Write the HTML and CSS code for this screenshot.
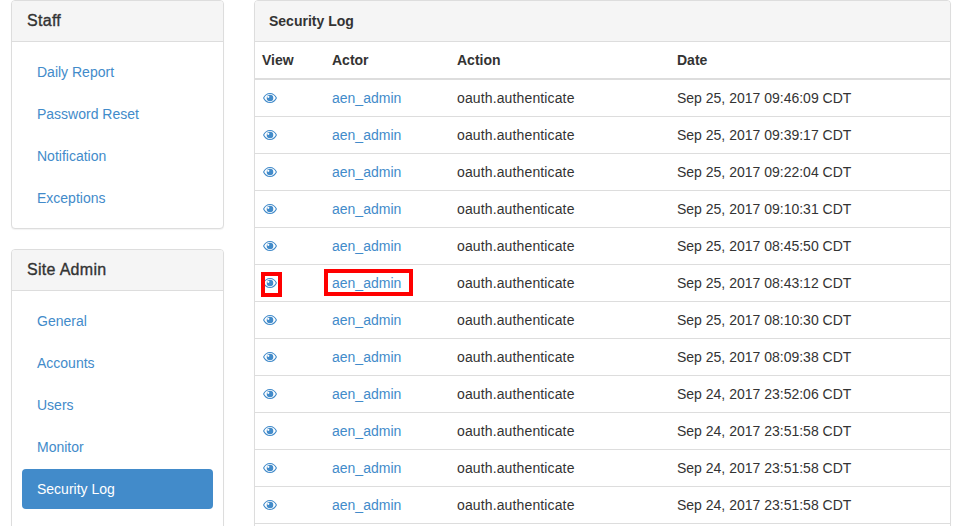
FILE: index.html
```html
<!DOCTYPE html>
<html lang="en">
<head>
<meta charset="utf-8">
<title>Security Log</title>
<link rel="stylesheet" href="styles.css">
</head>
<body>
<svg class="defs" width="0" height="0" aria-hidden="true">
  <symbol id="eye" viewBox="0 0 14 10">
    <path fill-rule="evenodd" d="M7 0C3.8 0 1.300 2 0 5c1.300 3 3.800 5 7 5s5.700-2 7-5C12.700 2 10.200 0 7 0zM7 1.100c2.500 0 4.700 1.500 5.800 3.900C11.700 7.400 9.500 8.900 7 8.900S2.300 7.400 1.200 5C2.300 2.600 4.500 1.100 7 1.100z"/>
    <path fill-rule="evenodd" d="M7 1.700A3.300 3.300 0 1 0 7 8.300 3.300 3.300 0 0 0 7 1.700zM5.300 2.700a1.100 1.100 0 1 1 0 2.200 1.100 1.100 0 0 1 0-2.200z"/>
  </symbol>
</svg>
<div class="layout">
  <aside class="sidebar">
    <section class="panel">
      <h3 class="panel-heading">Staff</h3>
      <ul class="nav">
        <li><a href="#">Daily Report</a></li>
        <li><a href="#">Password Reset</a></li>
        <li><a href="#">Notification</a></li>
        <li><a href="#">Exceptions</a></li>
      </ul>
    </section>
    <section class="panel">
      <h3 class="panel-heading">Site Admin</h3>
      <ul class="nav">
        <li><a href="#">General</a></li>
        <li><a href="#">Accounts</a></li>
        <li><a href="#">Users</a></li>
        <li><a href="#">Monitor</a></li>
        <li class="active"><a href="#">Security Log</a></li>
        <li><a href="#">Repo Groups</a></li>
      </ul>
    </section>
  </aside>
  <main class="content">
    <section class="panel">
      <h3 class="panel-heading log-heading">Security Log</h3>
      <table class="log">
        <thead>
          <tr><th class="c-view">View</th><th class="c-actor">Actor</th><th class="c-action">Action</th><th>Date</th></tr>
        </thead>
        <tbody>
          <tr><td><a class="eye" href="#"><svg><use href="#eye"/></svg></a></td><td><a href="#">aen_admin</a></td><td>oauth.authenticate</td><td>Sep 25, 2017 09:46:09 CDT</td></tr>
          <tr><td><a class="eye" href="#"><svg><use href="#eye"/></svg></a></td><td><a href="#">aen_admin</a></td><td>oauth.authenticate</td><td>Sep 25, 2017 09:39:17 CDT</td></tr>
          <tr><td><a class="eye" href="#"><svg><use href="#eye"/></svg></a></td><td><a href="#">aen_admin</a></td><td>oauth.authenticate</td><td>Sep 25, 2017 09:22:04 CDT</td></tr>
          <tr><td><a class="eye" href="#"><svg><use href="#eye"/></svg></a></td><td><a href="#">aen_admin</a></td><td>oauth.authenticate</td><td>Sep 25, 2017 09:10:31 CDT</td></tr>
          <tr><td><a class="eye" href="#"><svg><use href="#eye"/></svg></a></td><td><a href="#">aen_admin</a></td><td>oauth.authenticate</td><td>Sep 25, 2017 08:45:50 CDT</td></tr>
          <tr><td><a class="eye marked" href="#"><svg><use href="#eye"/></svg></a></td><td><a class="marked-link" href="#">aen_admin</a></td><td>oauth.authenticate</td><td>Sep 25, 2017 08:43:12 CDT</td></tr>
          <tr><td><a class="eye" href="#"><svg><use href="#eye"/></svg></a></td><td><a href="#">aen_admin</a></td><td>oauth.authenticate</td><td>Sep 25, 2017 08:10:30 CDT</td></tr>
          <tr><td><a class="eye" href="#"><svg><use href="#eye"/></svg></a></td><td><a href="#">aen_admin</a></td><td>oauth.authenticate</td><td>Sep 25, 2017 08:09:38 CDT</td></tr>
          <tr><td><a class="eye" href="#"><svg><use href="#eye"/></svg></a></td><td><a href="#">aen_admin</a></td><td>oauth.authenticate</td><td>Sep 24, 2017 23:52:06 CDT</td></tr>
          <tr><td><a class="eye" href="#"><svg><use href="#eye"/></svg></a></td><td><a href="#">aen_admin</a></td><td>oauth.authenticate</td><td>Sep 24, 2017 23:51:58 CDT</td></tr>
          <tr><td><a class="eye" href="#"><svg><use href="#eye"/></svg></a></td><td><a href="#">aen_admin</a></td><td>oauth.authenticate</td><td>Sep 24, 2017 23:51:58 CDT</td></tr>
          <tr><td><a class="eye" href="#"><svg><use href="#eye"/></svg></a></td><td><a href="#">aen_admin</a></td><td>oauth.authenticate</td><td>Sep 24, 2017 23:51:58 CDT</td></tr>
          <tr><td><a class="eye" href="#"><svg><use href="#eye"/></svg></a></td><td><a href="#">aen_admin</a></td><td>oauth.authenticate</td><td>Sep 24, 2017 23:51:58 CDT</td></tr>
        </tbody>
      </table>
    </section>
  </main>
</div>
</body>
</html>
```

FILE: styles.css
```css
*, *::after { box-sizing: border-box; }
html, body { height: 526px; overflow: hidden; }
body {
  margin: 0;
  background: #fff;
  color: #333;
  font-family: "Liberation Sans", Arial, sans-serif;
  font-size: 14px;
  line-height: 20px;
}
a { color: #428bca; text-decoration: none; }
.defs { position: absolute; }
.layout {
  display: flex;
  align-items: flex-start;
  gap: 30px;
  padding-left: 11px;
  width: 951px;
}
.sidebar { width: 213px; flex: none; display: flex; flex-direction: column; gap: 20px; }
.content { flex: 1; min-width: 0; }
.panel {
  background: #fff;
  border: 1px solid #ddd;
  border-radius: 4px;
  box-shadow: 0 1px 1px rgba(0, 0, 0, .05);
}
.panel-heading {
  margin: 0;
  height: 41px;
  padding: 10px 15px;
  background: #f5f5f5;
  border-bottom: 1px solid #ddd;
  border-radius: 3px 3px 0 0;
  font-size: 16px;
  line-height: 20px;
  font-weight: 400;
  -webkit-text-stroke: .35px #333;
  letter-spacing: .3px;
}
.log-heading {
  font-size: 14px;
  font-weight: 700;
  padding-left: 14px;
  -webkit-text-stroke: 0;
  letter-spacing: 0;
}
.nav {
  list-style: none;
  margin: 0;
  padding: 10px;
  display: flex;
  flex-direction: column;
  gap: 2px;
}
.nav a { display: block; padding: 10px 15px; border-radius: 4px; }
.nav .active a { background: #428bca; color: #fff; }
.log { width: 100%; border-collapse: collapse; table-layout: fixed; }
.log th, .log td {
  padding: 8px 7px;
  text-align: left;
  line-height: 20px;
  vertical-align: top;
}
.log th { border-bottom: 2px solid #ddd; font-weight: 700; }
.log td { border-bottom: 1px solid #ddd; }
.log td:nth-child(3) { letter-spacing: .13px; }
.c-view { width: 70px; }
.c-actor { width: 125px; }
.c-action { width: 220px; }
.eye { display: block; height: 20px; padding: 5px 0 0 1px; position: relative; }
.eye svg { display: block; width: 14px; height: 10px; fill: #428bca; }
.marked::after {
  content: "";
  position: absolute;
  left: -1px;
  top: -1px;
  width: 21px;
  height: 25px;
  border: 4px solid #f00;
}
.marked-link { position: relative; display: inline-block; }
.marked-link::after {
  content: "";
  position: absolute;
  left: -8px;
  top: -4px;
  right: -12px;
  height: 27px;
  border: 4px solid #f00;
}
```
